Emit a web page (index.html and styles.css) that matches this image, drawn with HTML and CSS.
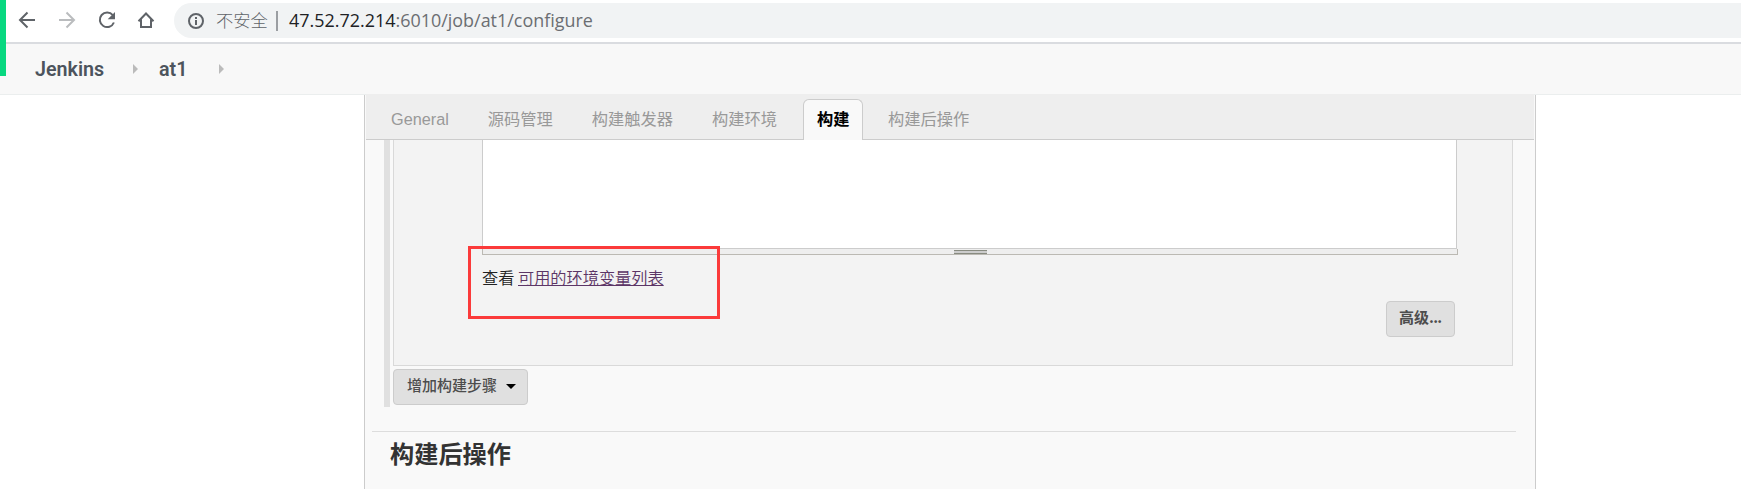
FILE: index.html
```html
<!DOCTYPE html>
<html lang="zh-CN">
<head>
<meta charset="utf-8">
<title>at1 Config [Jenkins]</title>
<link rel="stylesheet" href="styles.css">
</head>
<body>
<div class="accent"></div>
<header class="toolbar">
  <svg class="nav" width="140" height="24" viewBox="0 0 140 24" fill="none" stroke="#5f6368" stroke-width="2">
    <path d="M18 12H3.500M10.500 4.500L3 12l7.500 7.500"/>
    <path stroke="#babcbe" d="M42 12H56.500M49.500 4.500L57 12 49.500 19.500"/>
    <path d="M95.800 7.200A7.300 7.300 0 1 0 96.900 14.500"/>
    <path fill="#5f6368" stroke="none" d="M98 4v7.300h-7.300z"/>
    <path d="M121.500 13.200L129 5.500l7.500 7.700M124 11.500V19h10v-7.500" />
  </svg>
  <div class="omnibox">
    <svg class="info" width="18" height="18" viewBox="0 0 18 18" fill="none" stroke="#5f6368" stroke-width="2">
      <circle cx="9" cy="9" r="7"/><path d="M9 8v5M9 5v2"/>
    </svg>
    <span class="insecure">不安全</span>
    <span class="divider"></span>
    <span class="url"><b>47.52.72.214</b>:6010/job/at1/configure</span>
  </div>
</header>
<nav class="breadcrumbs">
  <a class="crumb">Jenkins</a><i class="arrow"></i><a class="crumb second">at1</a><i class="arrow last"></i>
</nav>
<main class="panel">
  <div class="tabs">
    <a class="tab">General</a>
    <a class="tab">源码管理</a>
    <a class="tab">构建触发器</a>
    <a class="tab">构建环境</a>
    <a class="tab active">构建</a>
    <a class="tab">构建后操作</a>
  </div>
  <section class="steps">
    <div class="chunk">
      <div class="editor"></div>
      <div class="resizer"><i class="grip"></i></div>
      <p class="help">查看 <a class="link">可用的环境变量列表</a></p>
      <button class="button advanced">高级<span class="dots">...</span></button>
    </div>
    <button class="button add">增加构建步骤<i class="caret"></i></button>
  </section>
  <h2 class="heading">构建后操作</h2>
</main>
<div class="highlight"></div>
</body>
</html>
```

FILE: styles.css
```css
* { box-sizing: border-box; }
body {
  margin: 0;
  height: 489px;
  overflow: hidden;
  display: flex;
  flex-direction: column;
  background: #fff;
  color: #333;
  font: 16px "Liberation Sans", "Noto Sans CJK SC", sans-serif;
}
.accent { position: absolute; left: 0; top: 0; width: 6px; height: 76px; background: #08d880; }
.toolbar {
  flex: none;
  height: 44px;
  padding: 3px 0 0 17px;
  display: flex;
  border-bottom: 2px solid #dadce0;
}
.nav { flex: none; margin: 5px 17px 0 0; }
.omnibox {
  flex: 1;
  height: 35px;
  padding-left: 13px;
  display: flex;
  align-items: center;
  border-radius: 18px 0 0 18px;
  background: #f1f3f4;
  white-space: nowrap;
}
.info { flex: none; }
.insecure { margin-left: 11px; width: 52px; padding-bottom: 1px; font: 17.300px/34px "Noto Sans CJK SC", sans-serif; font-weight: 300; color: #5f6368; }
.divider { width: 2px; height: 20px; margin: 0 11px 0 8px; background: #9b9ea2; }
.url { padding-bottom: 2px; font: 17.950px/34px "Open Sans", sans-serif; color: #6b6e72; }
.url b { font-weight: 400; color: #202124; }
.breadcrumbs {
  flex: none;
  height: 51px;
  padding-left: 35px;
  display: flex;
  align-items: center;
  background: #f8f8f8;
  border-bottom: 1px solid #ebeeee;
}
.crumb { width: 98px; font: 600 19.700px/47px Roboto, sans-serif; color: #4d545d; }
.second { width: 33px; margin-left: 21px; }
.arrow { border: solid transparent; border-width: 5px 0 5px 5px; border-left-color: #bbb; }
.last { margin-left: 27px; }
.panel {
  flex: 1;
  width: 1172px;
  margin-left: 364px;
  border: solid #ccc;
  border-width: 0 1px;
  background: #f9f9f9;
}
.tabs {
  height: 46px;
  margin: -1px 1px 0;
  padding: 5px 0 0 11px;
  display: flex;
  background: #eee;
  border-bottom: 1px solid #ccc;
  position: relative;
}
.tab { height: 40px; padding: 0 14px; margin-right: 11px; font-size: 16.250px; line-height: 41px; color: #999; white-space: nowrap; }
.active {
  width: 60px;
  height: 41px;
  margin-left: 1px;
  padding: 0 13px;
  border: 1px solid #ccc;
  border-bottom: 0;
  border-radius: 6px 6px 0 0;
  background: #f9f9f9;
  color: #000;
  font-weight: 700;
  line-height: 39px;
}
.steps { width: 1129px; height: 267px; margin-left: 19px; padding-left: 3px; border-left: 6px solid #e0e0e0; }
.chunk { height: 226px; padding: 0 55px 0 88px; border: 1px solid #d9d9d9; border-top: 0; background: #f3f3f3; }
.editor { width: 975px; height: 109px; border: 1px solid #ccc; border-top: 0; background: #fff; }
.resizer { width: 976px; height: 6px; padding-top: 1px; border: solid #bbb9b3; border-width: 0 1px 1px; background: #eee; }
.grip { display: block; width: 33px; height: 4px; margin: 0 auto; border: solid #888b80; border-width: 1px 0; background: #ccc; }
.help { margin: 10px 0 0; font: 16.200px/24px "Noto Sans CJK SC", sans-serif; font-weight: 350; color: #222; }
.link { color: #5c3566; text-decoration: underline; }
.button {
  height: 36px;
  padding: 0 12px 5px;
  display: flex;
  align-items: center;
  border: 1px solid #ccc;
  border-radius: 4px;
  background: #e0e0e0;
  color: #4d4d4d;
  font: 500 15px "Noto Sans CJK SC", sans-serif;
  white-space: nowrap;
}
.advanced { width: 69px; margin: 12px 2px 0 auto; font-weight: 700; }
.dots { letter-spacing: -0.700px; }
.add { width: 135px; margin-top: 3px; padding-left: 13px; }
.caret { margin: 4px 0 0 9px; border: solid transparent; border-width: 5px 5px 0; border-top-color: #000; }
.heading {
  width: 1144px;
  margin: 24px 0 0 7px;
  padding: 3px 0 0 18px;
  border-top: 1px solid #ddd;
  font: 700 24.200px/36px "Noto Sans CJK SC", sans-serif;
  color: #333;
}
.highlight { position: absolute; left: 468px; top: 246px; width: 252px; height: 73px; border: 3px solid #fb3a3a; }
```
